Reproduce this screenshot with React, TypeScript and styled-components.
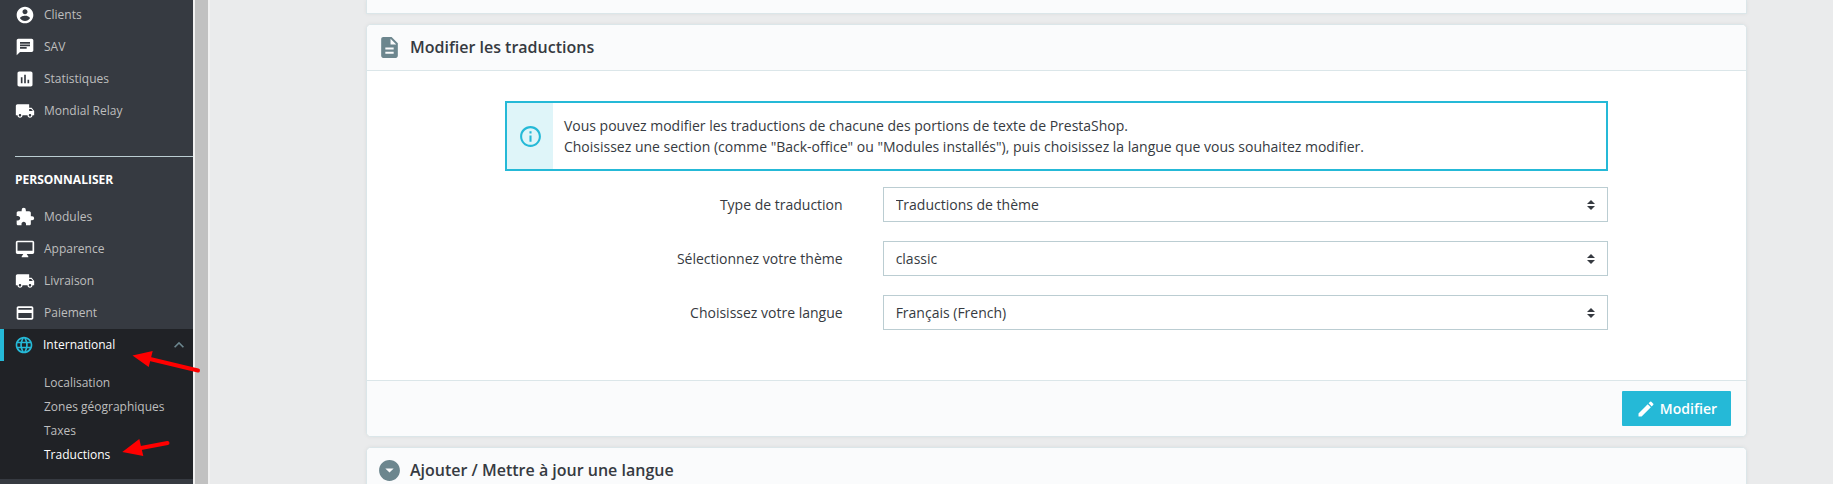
import React from "react";
import styled, { createGlobalStyle } from "styled-components";
import type { IconType } from "react-icons";
import {
  MdArrowDropDownCircle,
  MdChat,
  MdDescription,
  MdEdit,
  MdExtension,
  MdInfoOutline,
  MdInsertChart,
  MdKeyboardArrowUp,
  MdLanguage,
  MdLocalShipping,
  MdPayment,
} from "react-icons/md";

const color = {
  page: "#eaebec",
  sidebar: "#363a41",
  sidebarActive: "#202226",
  sidebarText: "#bebebe",
  accent: "#25b9d7",
  accentSoft: "#dff5f9",
  text: "#363a41",
  muted: "#6c868e",
  border: "#bbcdd2",
  cardLine: "#dbe6e9",
  cardTint: "#fafbfc",
};

const GlobalStyle = createGlobalStyle`
  *, *::before, *::after { box-sizing: border-box; }
  body {
    margin: 0;
    overflow: hidden;
    background: ${color.page};
    color: ${color.text};
    font: 14px/21px "Open Sans", sans-serif;
  }
`;

const Page = styled.div`
  position: relative;
  display: flex;
  height: 100vh;
  overflow: hidden;
`;

const Sidebar = styled.nav`
  flex: 0 0 193px;
  background: ${color.sidebar};
  overflow: hidden;
`;

const ScrollRail = styled.div`
  flex: 0 0 17px;
  border: solid #f1f1f1;
  border-width: 0 2px;
  background: #c1c1c1;
`;

const MenuList = styled.ul`
  list-style: none;
  margin: -1px 0 0;
  padding: 0;
`;

const MenuLink = styled.a<{ $active?: boolean }>`
  display: flex;
  align-items: center;
  gap: 9px;
  height: 32px;
  padding: 0 4px 0 ${(p) => (p.$active ? 10 : 15)}px;
  border-left: ${(p) => (p.$active ? `4px solid ${color.accent}` : "0")};
  background: ${(p) => (p.$active ? color.sidebarActive : "transparent")};
  color: ${(p) => (p.$active ? "#fff" : color.sidebarText)};
  font-size: 12px;
  line-height: 18px;
  text-decoration: none;

  svg {
    flex: none;
    color: ${(p) => (p.$active ? color.accent : "#fff")};
  }

  svg:nth-of-type(2) {
    margin-left: auto;
    color: ${color.muted};
  }
`;

const Divider = styled.hr`
  height: 1px;
  margin: 29px 0 0 15px;
  border: 0;
  background: ${color.border};
`;

const MenuHeading = styled.h2`
  margin: 14px 0 13px 15px;
  color: #fff;
  font-size: 12px;
  font-weight: 700;
  line-height: 18px;
  text-transform: uppercase;
`;

const SubMenu = styled.ul`
  list-style: none;
  margin: 0;
  padding: 10px 0 12px 44px;
  background: ${color.sidebarActive};
`;

const SubLink = styled.a<{ $active?: boolean }>`
  display: block;
  color: ${(p) => (p.$active ? "#fff" : color.sidebarText)};
  font-size: 12px;
  line-height: 24px;
  text-decoration: none;
`;

const Main = styled.main`
  flex: 1;
  min-width: 0;
  padding: 0 86px 0 156px;
`;

const Card = styled.section<{ $continued?: boolean }>`
  margin-bottom: 10px;
  border: 1px solid ${color.cardLine};
  border-top-width: ${(p) => (p.$continued ? 0 : 1)}px;
  border-radius: ${(p) => (p.$continued ? 0 : 5)}px;
  background: #fff;
  box-shadow: 0 0 4px rgba(0, 0, 0, 0.06);
  overflow: hidden;
`;

const CardTail = styled.div`
  height: 13px;
  background: ${color.cardTint};
`;

const CardHeader = styled.h3`
  display: flex;
  align-items: center;
  gap: 8px;
  margin: 0;
  padding: 10px;
  border-bottom: 1px solid ${color.cardLine};
  background: ${color.cardTint};
  font-size: 16px;
  font-weight: 600;
  line-height: 25px;

  svg {
    flex: none;
    color: ${color.muted};
  }
`;

const FormBody = styled.form`
  width: 80%;
  margin: 0 auto;
  padding: 30px 0 50px;
`;

const CardFooter = styled.div`
  display: flex;
  justify-content: flex-end;
  padding: 10px 15px;
  border-top: 1px solid ${color.cardLine};
  background: ${color.cardTint};
`;

const Alert = styled.div`
  display: flex;
  margin-bottom: 16px;
  border: 2px solid ${color.accent};
`;

const AlertIcon = styled.div`
  display: flex;
  flex: 0 0 46px;
  align-items: center;
  justify-content: flex-end;
  padding-right: 10px;
  background: ${color.accentSoft};
  color: ${color.accent};
`;

const AlertText = styled.p`
  margin: 0;
  padding: 12px 11px;
`;

const Field = styled.div`
  display: grid;
  grid-template-columns: 1fr 2fr;
  align-items: center;
  margin: 0 -15px;

  & + & {
    margin-top: 19px;
  }
`;

const FieldLabel = styled.label`
  padding-right: 25px;
  text-align: right;
`;

const SelectWrap = styled.div`
  position: relative;
  margin: 0 15px;

  svg {
    position: absolute;
    top: 13px;
    right: 13px;
    pointer-events: none;
  }
`;

const Select = styled.select`
  display: block;
  appearance: none;
  width: 100%;
  height: 35px;
  padding: 0 28px 0 12px;
  border: 1px solid ${color.border};
  border-radius: 0;
  background: #fff;
  color: ${color.text};
  font: inherit;
`;

const PrimaryButton = styled.button`
  display: flex;
  align-items: center;
  gap: 4px;
  height: 35px;
  padding: 0 14px;
  border: 0;
  border-radius: 1px;
  background: ${color.accent};
  color: #fff;
  font: 600 14px/21px "Open Sans", sans-serif;
`;

const Annotations = styled.svg`
  position: absolute;
  top: 0;
  left: 0;
  pointer-events: none;
`;

type GlyphProps = { size?: number | string };

function AccountIcon({ size = 20 }: GlyphProps) {
  return (
    <svg width={size} height={size} viewBox="0 0 24 24" fill="currentColor" aria-hidden="true">
      <path d="M12 2C6.48 2 2 6.48 2 12s4.48 10 10 10 10-4.48 10-10S17.52 2 12 2zm0 3c1.66 0 3 1.34 3 3s-1.34 3-3 3-3-1.34-3-3 1.34-3 3-3zm0 14.2c-2.5 0-4.71-1.28-6-3.22.03-1.99 4-3.08 6-3.08 1.99 0 5.97 1.09 6 3.08-1.29 1.94-3.5 3.22-6 3.22z" />
    </svg>
  );
}

function DesktopIcon({ size = 20 }: GlyphProps) {
  return (
    <svg width={size} height={size} viewBox="0 0 24 24" fill="currentColor" aria-hidden="true">
      <path d="M21 2H3c-1.1 0-2 .9-2 2v12c0 1.1.9 2 2 2h7l-2 3v1h8v-1l-2-3h7c1.1 0 2-.9 2-2V4c0-1.1-.9-2-2-2zm0 12H3V4h18v10z" />
    </svg>
  );
}

type Entry = { label: string; Icon: IconType | React.FC<GlyphProps>; active?: boolean };

const sellEntries: Entry[] = [
  { label: "Clients", Icon: AccountIcon },
  { label: "SAV", Icon: MdChat },
  { label: "Statistiques", Icon: MdInsertChart },
  { label: "Mondial Relay", Icon: MdLocalShipping },
];

const customizeEntries: Entry[] = [
  { label: "Modules", Icon: MdExtension },
  { label: "Apparence", Icon: DesktopIcon },
  { label: "Livraison", Icon: MdLocalShipping },
  { label: "Paiement", Icon: MdPayment },
  { label: "International", Icon: MdLanguage, active: true },
];

const subEntries = ["Localisation", "Zones géographiques", "Taxes", "Traductions"];

const fields = [
  { id: "type", label: "Type de traduction", value: "Traductions de thème" },
  { id: "theme", label: "Sélectionnez votre thème", value: "classic" },
  { id: "language", label: "Choisissez votre langue", value: "Français (French)" },
];

function MenuEntry({ label, Icon, active }: Entry) {
  return (
    <li>
      <MenuLink href="#" $active={active}>
        <Icon size={20} />
        {label}
        {active && <MdKeyboardArrowUp size={20} />}
      </MenuLink>
    </li>
  );
}

export default function App() {
  return (
    <>
      <GlobalStyle />
      <Page>
        <Sidebar>
          <MenuList>
            {sellEntries.map((entry) => (
              <MenuEntry key={entry.label} {...entry} />
            ))}
          </MenuList>
          <Divider />
          <MenuHeading>Personnaliser</MenuHeading>
          <MenuList>
            {customizeEntries.map((entry) => (
              <MenuEntry key={entry.label} {...entry} />
            ))}
          </MenuList>
          <SubMenu>
            {subEntries.map((label) => (
              <li key={label}>
                <SubLink href="#" $active={label === "Traductions"}>
                  {label}
                </SubLink>
              </li>
            ))}
          </SubMenu>
        </Sidebar>
        <ScrollRail />
        <Main>
          <Card $continued>
            <CardTail />
          </Card>
          <Card>
            <CardHeader>
              <MdDescription size={25} />
              Modifier les traductions
            </CardHeader>
            <FormBody id="translations">
              <Alert>
                <AlertIcon>
                  <MdInfoOutline size={25} />
                </AlertIcon>
                <AlertText>
                  Vous pouvez modifier les traductions de chacune des portions de texte de PrestaShop.
                  <br />
                  Choisissez une section (comme "Back-office" ou "Modules installés"), puis choisissez la langue que
                  vous souhaitez modifier.
                </AlertText>
              </Alert>
              {fields.map(({ id, label, value }) => (
                <Field key={id}>
                  <FieldLabel htmlFor={id}>{label}</FieldLabel>
                  <SelectWrap>
                    <Select id={id} defaultValue={value}>
                      <option>{value}</option>
                    </Select>
                    <svg width="8" height="10" viewBox="0 0 4 5" aria-hidden="true">
                      <path fill={color.text} d="M2 0L0 2h4zm0 5L0 3h4z" />
                    </svg>
                  </SelectWrap>
                </Field>
              ))}
            </FormBody>
            <CardFooter>
              <PrimaryButton type="submit" form="translations">
                <MdEdit size={20} />
                Modifier
              </PrimaryButton>
            </CardFooter>
          </Card>
          <Card>
            <CardHeader>
              <MdArrowDropDownCircle size={25} />
              Ajouter / Mettre à jour une langue
            </CardHeader>
          </Card>
        </Main>
        <Annotations width="210" height="484" viewBox="0 0 210 484" fill="#f00" stroke="#f00" aria-hidden="true">
          <path d="M150 359L198 370.500M141 448L167.500 443" strokeWidth="4" strokeLinecap="round" />
          <path d="M132.500 355.500L152.700 351L148.700 367ZM122.300 452L139.300 439L143.300 456Z" stroke="none" />
        </Annotations>
      </Page>
    </>
  );
}
